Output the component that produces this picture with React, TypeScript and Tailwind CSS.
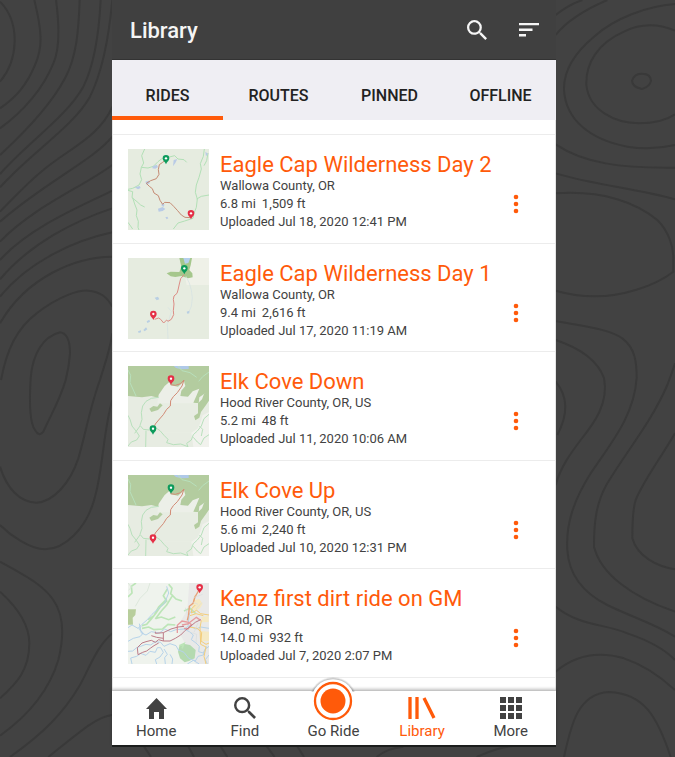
import React from "react";

const ORANGE = "#ff5a0a";

function Contours() {
  return (
    <svg
      aria-hidden="true"
      className="absolute inset-0 h-full w-full"
      viewBox="0 0 2025 2271"
      preserveAspectRatio="none"
      fill="none"
      stroke="#393939"
      strokeWidth="6"
    >
      <g>
        <path d="M0 5Q45 50 44 125Q42 195 0 245" />
        <path d="M103 0C125 90 130 140 105 195C80 255 50 290 0 325" />
        <path d="M168 0C180 90 178 150 160 190C130 265 70 335 0 385" />
        <path d="M239 0C236 90 230 170 195 235C150 320 60 410 0 465" />
        <path d="M302 0C296 120 280 200 250 260C200 350 80 430 0 522" />
        <path d="M337 0C325 130 305 220 270 290C220 380 90 460 0 562" />
        <path d="M337 320C300 410 200 450 130 510C80 550 40 595 0 635" />
        <path d="M337 410C280 480 130 550 0 665" />
        <path d="M337 495C250 560 100 620 0 725" />
        <path d="M337 572C250 615 90 680 0 780" />
        <path d="M337 625C230 660 90 730 0 838" />
        <path d="M337 697C230 720 90 780 0 890" />
        <path d="M337 770C230 770 80 830 0 970" />
        <path d="M3 1140C20 1050 50 985 110 940C180 885 240 870 265 872C300 875 320 890 337 920" />
        <path d="M92 1134C98 1060 130 1010 180 997C205 1000 210 1030 210 1060C208 1090 205 1110 197 1140C180 1200 150 1250 130 1295Q117 1312 105 1290C90 1270 88 1200 92 1134" />
        <path d="M337 1000C330 1050 315 1090 300 1140C270 1220 255 1310 235 1375C210 1450 160 1505 110 1508C60 1508 20 1465 0 1400" />
        <path d="M337 1200C310 1290 310 1400 285 1490C260 1590 190 1648 135 1648C90 1648 30 1605 0 1575" />
        <path d="M0 1685C80 1730 130 1755 160 1800C195 1850 190 1920 175 1980C145 2080 80 2150 0 2207" />
        <path d="M0 1775C50 1820 88 1870 88 1930C88 2010 50 2050 0 2095" />
        <path d="M337 1900C290 1940 270 2000 240 2055C190 2140 130 2200 30 2271" />
        <path d="M337 2145C290 2150 240 2195 145 2271" />
      </g>
      <path d="M430 2236L453 2271M563 2236L582 2271M660 2236L682 2271M798 2236L824 2271M890 2236L912 2271M1130 2271Q1160 2245 1210 2240M1430 2271Q1500 2240 1540 2238" />
      <g transform="translate(1662 0)">
        <path d="M5 45C30 25 50 12 85 0M5 105C40 60 90 30 160 0" />
        <path d="M363 12C280 18 180 55 120 110C60 160 28 210 30 270C35 360 110 420 220 440C270 448 320 445 363 435" />
        <path d="M363 92C310 70 260 70 210 95C130 130 95 190 97 255C105 330 180 368 255 370C300 370 335 362 363 343" />
        <path d="M262 221Q290 220 291 242Q288 260 264 267Q235 262 234 242Q240 222 262 221Z" />
        <path d="M5 433C90 490 200 505 363 503" />
        <path d="M5 520C120 555 250 565 363 598" />
        <path d="M5 580C150 570 250 610 310 660C345 695 358 740 358 775V815C300 860 200 890 120 889C80 889 40 882 5 872" />
        <path d="M5 963C90 980 160 985 205 1015C245 1045 248 1090 248 1134C240 1250 170 1330 110 1420C60 1500 35 1570 40 1650C45 1730 90 1780 160 1815C230 1850 300 1870 363 1910" />
        <path d="M5 1020C80 1045 130 1080 150 1134C165 1210 120 1270 80 1320C50 1360 20 1400 5 1455" />
        <path d="M5 1145Q60 1210 10 1305" />
        <path d="M363 1090C350 1130 350 1130 340 1155C290 1270 220 1350 160 1450C125 1510 120 1570 120 1640C140 1720 230 1790 363 1835" />
        <path d="M363 1300C310 1390 270 1440 245 1500C235 1530 235 1580 235 1615C250 1670 310 1700 363 1708" />
        <path d="M5 1820C80 1880 150 1870 220 1900C280 1920 330 1945 363 1980" />
        <path d="M5 2015C70 1960 140 1955 210 1975C270 1995 320 2030 363 2070" />
        <path d="M30 2271C50 2180 70 2080 165 2076C270 2080 310 2150 350 2271" />
      </g>
    </svg>
  );
}

function Pin({ x, y, color }: { x: number; y: number; color: string }) {
  return (
    <g transform={`translate(${x} ${y})`}>
      <path d="M0 0C-3 -8 -10 -10 -10 -18A10 10 0 0 1 10 -18C10 -10 3 -8 0 0Z" fill={color} />
      <circle cx="0" cy="-18" r="3.5" fill="#fff" />
    </g>
  );
}

const GREEN = "#0d9b5c";
const RED = "#e52f46";

function MapFrame({ label, bg, children }: { label: string; bg: string; children: React.ReactNode }) {
  return (
    <svg role="img" aria-label={label} className="size-[81px] shrink-0" viewBox="0 0 243 243" fill="none">
      <rect width="243" height="243" fill={bg} />
      {children}
    </svg>
  );
}

function MapDay2() {
  return (
    <MapFrame label="Map of Eagle Cap Wilderness Day 2" bg="#e6ece0">
      <g stroke="#b2e0b6" strokeWidth="3">
        <path d="M50 0L41 20L47 42L40 55L36 75L41 92L33 108L14 118L0 121" />
        <path d="M0 124L14 128L12 146L27 158L38 168L50 174M14 146L20 165L27 183L25 200L31 217L30 235L33 243M0 220L14 240" />
        <path d="M40 55L60 57L76 52L90 38L100 30L124 24L140 20L150 30L168 32L176 40" />
        <path d="M229 0L226 22L217 44L220 60L213 85L205 108L202 130L208 150L205 175L198 193L195 208L170 216L150 222L136 240M243 138L220 142L206 150M240 12L236 35L228 50" />
      </g>
      <g fill="#b9cbe6">
        <path d="M74 52L86 47L90 54L82 59L73 58ZM52 98L62 95L66 102L56 108ZM20 115L35 111L38 117L30 121ZM90 179L104 174L112 180L104 186L92 188ZM101 163L109 165L108 173L101 171ZM137 33L148 30L142 42L135 52ZM112 205L118 203L121 208L116 211ZM232 8L240 14L234 22Z" />
      </g>
      <path d="M114 32L104 40L94 47L91 62L93 76L85 89L68 95L55 103L64 112L73 119L78 132L91 140L96 154L104 166L110 160L126 161L137 172L148 184L160 198L171 205L188 206" stroke="#c58b74" strokeWidth="3" />
      <Pin x={114} y={46} color={GREEN} />
      <Pin x={189} y={211} color={RED} />
    </MapFrame>
  );
}

function MapDay1() {
  return (
    <MapFrame label="Map of Eagle Cap Wilderness Day 1" bg="#e6ece0">
      <path d="M168 40L188 20V0H243V81H176Z" fill="#eff1e8" />
      <path d="M154 0H192L188 22L184 36L193 46L194 58L180 61L160 54L142 57L128 55L116 46L128 41L154 42L160 26Z" fill="#a5c78c" />
      <path d="M166 0H187L181 15L171 17Z" fill="#b4d0ed" />
      <path d="M174 55L184 75L190 96L193 120L190 145L182 163M120 148L130 160L124 182L118 198L120 243" stroke="#d3e1e2" strokeWidth="2" />
      <path d="M80 119L90 116L94 124L86 127ZM56 190L64 185L66 191L58 195ZM46 216L54 208L58 214L50 220ZM30 220L39 217L39 223L32 225ZM176 161L184 158L184 166L178 167Z" fill="#b9cfe4" />
      <path d="M169 49L158 62L154 78L150 96L147 106L138 114L136 124L138 138L136 158L137 170L130 184L120 190L116 186L107 195L98 184L92 180L80 184" stroke="#dc8c85" strokeWidth="3" />
      <Pin x={169} y={49} color={GREEN} />
      <Pin x={76} y={186} color={RED} />
    </MapFrame>
  );
}

function MapElkCove({ top, bottom, label }: { top: string; bottom: string; label: string }) {
  return (
    <MapFrame label={label} bg="#e7ece2">
      <path d="M0 0H243V145L235 150L228 165H208L211 150L205 145L209 120H90V95L70 90L42 94L0 90Z" fill="#b3cc9f" />
      <path d="M88 112L92 86L110 60L124 48L128 58L150 62L168 46L172 60L160 74L157 90L180 92L194 76L214 68L205 90L196 110L212 112L214 94L228 84L243 80V200H88Z" fill="#ecefe8" />
      <path d="M88 112H243V200H88Z" fill="#e7ece2" />
      <path d="M210 112V142L198 150L202 163L214 155L219 138L232 120L243 104V75L228 84L222 100Z" fill="#b3cc9f" />
      <path d="M64 128L76 120L88 122L96 112L104 118L90 132L70 138Z" fill="#b3cc9f" />
      <path d="M137 0H182V9L160 10L144 6Z" fill="#afc9e8" />
      <path d="M243 138L224 148L217 170L208 188L190 200L196 243H243Z" fill="#f1f2ed" />
      <g stroke="#b8e0bc" strokeWidth="3">
        <path d="M0 12L8 28L6 50L16 72L24 90M92 94L70 97L54 106L44 120L40 140L42 160L36 178L46 190L64 192L84 186L96 194L108 208L120 220L116 230L136 236L158 234L180 242" />
        <path d="M0 148L6 160L12 180L25 196L34 210L26 222L10 228L0 240M54 194L53 243M36 180L20 202" />
        <path d="M243 145L228 158L220 180L208 195L196 206L190 222L176 232L180 243M243 206L228 216L218 236L208 228L196 214M214 180L224 190L220 210M150 0L162 14L186 20L206 34M243 18L224 32L212 46" />
      </g>
      <path d="M128 56L142 58L158 53L168 42L162 60L148 80L136 92L128 104L127 120L116 130L106 146L92 162L82 174L79 182" stroke="#d28b76" strokeWidth="3" />
      <Pin x={129} y={56} color={top} />
      <Pin x={75} y={206} color={bottom} />
    </MapFrame>
  );
}

function MapKenz() {
  return (
    <MapFrame label="Map of Kenz first dirt ride on GM" bg="#eff3ed">
      <path d="M184 0H243V243H204L190 215L174 185L154 150L160 112L178 80Z" fill="#e9e9e8" />
      <path d="M0 79H24L22 96L14 104L15 125H0Z" fill="#b8ce9c" />
      <path d="M154 190L166 182L186 186L203 201L200 226L183 234L170 238L156 226L150 206Z" fill="#b4dab0" />
      <path d="M196 52L214 48L224 62L216 76L202 84L192 74ZM220 102L242 99V117L222 118ZM219 144L243 146V174H221Z" fill="#f5e9c3" />
      <path d="M122 4L132 16L128 32L144 48L162 54M118 18L106 38L116 54L98 70L84 90L70 108L56 124L42 128M132 40L116 66L100 84L82 108M60 110L78 98L92 72L116 48M84 106L100 102L122 110L142 102M42 136L62 132L78 140L104 138L120 124L142 126M0 42L12 30L10 10L24 0M168 84L186 76L203 92M154 188L168 182L162 196" stroke="#bce5b7" strokeWidth="5" />
      <path d="M0 0L10 12L2 22M66 0L58 24L36 46L22 70" stroke="#dde8dc" strokeWidth="3" />
      <g stroke="#b6d3ea" strokeWidth="3">
        <path d="M0 134L12 126L30 136L42 124L58 110L72 94L92 76L110 60L122 30L116 10M34 122L40 150L54 156L70 146L94 150L110 138L128 146L144 140L168 138L184 128L204 138L218 132L243 136" />
        <path d="M0 175L16 166L36 161L46 150L32 138L40 130M0 205L14 204L26 194L38 190L54 184L68 186L82 176L98 178L108 190L126 182L144 188L152 202M12 243L8 225L26 220L38 211L54 217L66 205L82 208L88 194L98 194L106 208L96 222L82 230L86 243M112 243L110 224L118 214L108 198M132 243L134 228L126 214" />
        <path d="M168 138L184 146L196 156L190 170L204 180L214 190L212 206L226 210L236 190M180 128L184 92L192 82M150 200L168 208L182 226L202 234L210 220L226 216L230 200L243 190M243 216L232 230L238 243M178 243L196 232L214 243" />
      </g>
      <path d="M202 66L192 76L190 90L206 82L218 92L243 96M186 98L204 92L226 98M184 132L207 136L221 148L219 174L234 184L243 180M220 112L216 134L218 184L234 192L228 220L234 243M201 38L197 56" stroke="#f4cd79" strokeWidth="3" />
      <path d="M148 150L148 127L162 114L182 118L190 125L180 138L168 136M162 126L183 122M178 124L205 103L218 112" stroke="#e79a9e" strokeWidth="4" />
      <path d="M213 21L201 42L195 61L184 70L182 94L178 112" stroke="#e6a077" strokeWidth="4" />
      <path d="M218 110L202 118L186 131L172 142L158 156L142 166L126 174L106 174V149L129 138L150 132L168 130M106 174L92 170L82 178L70 172L54 176L42 180L28 194L30 215L44 208L56 204L68 195L78 188L92 180M106 149L82 151L82 146M70 158L86 163L106 166" stroke="#bd7c88" strokeWidth="3" />
      <path d="M196 58L210 64M188 148L206 154L204 180M196 44L224 34M222 58L204 78M210 120L198 148M172 74L180 100" stroke="#d8dcdc" strokeWidth="2" />
      <Pin x={215} y={31} color={RED} />
    </MapFrame>
  );
}

const rides = [
  { title: "Eagle Cap Wilderness Day 2", place: "Wallowa County, OR", miles: "6.8 mi", feet: "1,509 ft", date: "Uploaded Jul 18, 2020 12:41 PM", map: <MapDay2 /> },
  { title: "Eagle Cap Wilderness Day 1", place: "Wallowa County, OR", miles: "9.4 mi", feet: "2,616 ft", date: "Uploaded Jul 17, 2020 11:19 AM", map: <MapDay1 /> },
  { title: "Elk Cove Down", place: "Hood River County, OR, US", miles: "5.2 mi", feet: "48 ft", date: "Uploaded Jul 11, 2020 10:06 AM", map: <MapElkCove label="Map of Elk Cove Down" top={RED} bottom={GREEN} /> },
  { title: "Elk Cove Up", place: "Hood River County, OR, US", miles: "5.6 mi", feet: "2,240 ft", date: "Uploaded Jul 10, 2020 12:31 PM", map: <MapElkCove label="Map of Elk Cove Up" top={GREEN} bottom={RED} /> },
  { title: "Kenz first dirt ride on GM", place: "Bend, OR", miles: "14.0 mi", feet: "932 ft", date: "Uploaded Jul 7, 2020 2:07 PM", map: <MapKenz /> },
];

const tabs = ["RIDES", "ROUTES", "PINNED", "OFFLINE"];

function SearchIcon({ className }: { className: string }) {
  return (
    <svg aria-hidden="true" viewBox="3 3 17.5 17.5" className={className} fill="currentColor">
      <path d="M15.5 14h-.79l-.28-.27A6.471 6.471 0 0 0 16 9.5 6.5 6.5 0 1 0 9.5 16c1.61 0 3.09-.59 4.23-1.57l.27.28v.79l5 4.99L20.49 19l-4.99-5zm-6 0C7.01 14 5 11.99 5 9.5S7.01 5 9.5 5 14 7.01 14 9.5 11.99 14 9.5 14z" />
    </svg>
  );
}

function NavItem({ label, active, children }: { label: string; active?: boolean; children: React.ReactNode }) {
  return (
    <a
      href="#"
      aria-current={active ? "page" : undefined}
      className={`flex flex-1 flex-col items-center ${active ? "text-[#ff5a0a]" : "text-[#424242]"}`}
    >
      <span className="flex h-[31px] items-end justify-center pb-[3px]">{children}</span>
      <span className="text-[15px] leading-[18px]">{label}</span>
    </a>
  );
}

export default function App() {
  return (
    <div className="relative grid min-h-screen grid-cols-[112fr_444fr_119fr] items-start bg-[#424242] font-[Roboto,sans-serif]">
      <Contours />
      <div className="relative col-start-2 flex flex-col border-b-2 border-[#1d1f1e] bg-white">
        <header className="flex h-[60px] items-center border-b border-[#333333] bg-[#404040] pr-[17px] pl-[18px] text-[#f5f5f5]">
          <h1 className="flex-1 pt-0.5 text-[22px] leading-7 font-medium">Library</h1>
          <button aria-label="Search" className="mr-8">
            <SearchIcon className="size-5" />
          </button>
          <button aria-label="Sort">
            <svg aria-hidden="true" viewBox="0 0 20 14" className="h-[14px] w-5" fill="currentColor">
              <path d="M0 0h20v2.3H0zM0 5.5h13.5v2.5H0zM0 11h7v2.5H0z" />
            </svg>
          </button>
        </header>

        <nav aria-label="Library sections" className="flex h-[60px] bg-[#efeef3]">
          {tabs.map((tab, i) => (
            <a
              key={tab}
              href="#"
              className={`flex flex-1 items-center justify-center border-b-4 pt-4 text-base font-medium text-[#222222] ${
                i === 0 ? "border-[#ff5a0a]" : "border-transparent"
              }`}
            >
              {tab}
            </a>
          ))}
        </nav>

        <main className="border-x border-[#e4e4e4] pt-3.5 pb-3">
          <ul className="grid h-[544px] grid-rows-5 border-t border-[#ececec]">
            {rides.map((ride) => (
              <li key={ride.title} className="flex border-b border-[#ececec] pt-3.5 pl-[15px]">
                {ride.map}
                <div className="ml-[11px] flex-1 text-[13px] leading-[18px] text-[#424242]">
                  <h2 className="-mb-1 text-[22px] leading-8">
                    <a href="#" className="text-[#ff5a0a]">{ride.title}</a>
                  </h2>
                  <p>{ride.place}</p>
                  <p className="flex gap-1.5">
                    <span>{ride.miles}</span>
                    <span>{ride.feet}</span>
                  </p>
                  <p>{ride.date}</p>
                </div>
                <button aria-label={`Options for ${ride.title}`} className="mt-[45px] mr-9 h-5 w-1.5">
                  <svg aria-hidden="true" viewBox="0 0 6 20" className="h-5 w-1.5" fill={ORANGE}>
                    <circle cx="3" cy="3" r="2.3" />
                    <circle cx="3" cy="10" r="2.3" />
                    <circle cx="3" cy="17" r="2.3" />
                  </svg>
                </button>
              </li>
            ))}
          </ul>
        </main>

        <nav aria-label="Main" className="flex h-[55px] border-t border-[#c4c4c4] bg-white pr-px shadow-[0_-1px_3px_rgba(0,0,0,0.25)]">
          <NavItem label="Home">
            <svg aria-hidden="true" viewBox="0 0 21 21" className="size-[21px]" fill="currentColor">
              <path d="M10.5 0L21 11H18V21H13V14H8V21H3V11H0Z" />
            </svg>
          </NavItem>
          <NavItem label="Find">
            <SearchIcon className="size-[22px]" />
          </NavItem>
          <NavItem label="Go Ride">
            <span className="relative size-6">
              <svg
                aria-hidden="true"
                viewBox="0 0 48 48"
                className="absolute -top-[18px] -left-3 size-12"
              >
                <defs>
                  <clipPath id="above-bar"><rect width="48" height="15" /></clipPath>
                </defs>
                <circle cx="24" cy="24" r="24" fill="#000" fillOpacity="0.06" clipPath="url(#above-bar)" />
                <circle cx="24" cy="24" r="23.2" fill="#000" fillOpacity="0.1" clipPath="url(#above-bar)" />
                <circle cx="24" cy="24" r="22.5" fill="#000" fillOpacity="0.1" clipPath="url(#above-bar)" />
                <circle cx="24" cy="24" r="21.8" fill="#fff" />
                <circle cx="24" cy="24" r="18" fill="none" stroke={ORANGE} strokeWidth="2.3" />
                <circle cx="24" cy="24" r="12.5" fill={ORANGE} />
              </svg>
            </span>
          </NavItem>
          <NavItem label="Library" active>
            <svg aria-hidden="true" viewBox="0 0 28 22" className="h-[22px] w-7" fill="none" stroke="currentColor" strokeWidth="3.3">
              <path d="M2 0V22M9 0V22M16 1L26 21" />
            </svg>
          </NavItem>
          <NavItem label="More">
            <svg aria-hidden="true" viewBox="0 0 22 22" className="size-[22px]" fill="currentColor">
              <path d="M0 0h6v6H0zM8 0h6v6H8zM16 0h6v6h-6zM0 8h6v6H0zM8 8h6v6H8zM16 8h6v6h-6zM0 16h6v6H0zM8 16h6v6H8zM16 16h6v6h-6z" />
            </svg>
          </NavItem>
        </nav>
      </div>
    </div>
  );
}
